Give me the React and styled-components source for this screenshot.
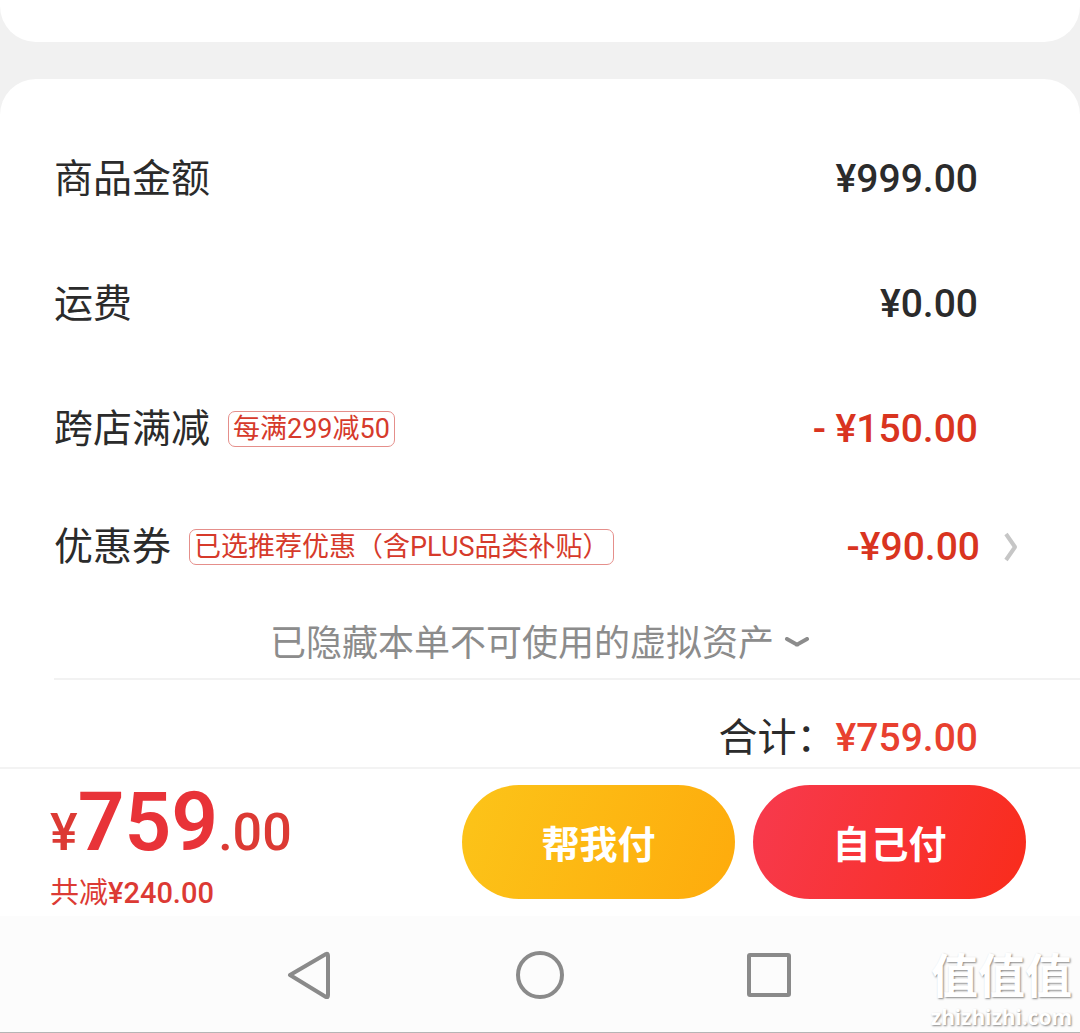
import styled, { createGlobalStyle } from 'styled-components';

const rows = [
  { label: '商品金额', price: '¥999.00' },
  { label: '运费', price: '¥0.00' },
  { label: '跨店满减', tag: '每满299减50', price: '- ¥150.00', off: true },
];

function App() {
  return (
    <>
      <GlobalStyle />
      <Page>
        <PrevCard />
        <Card>
          {rows.map(({ label, tag, price, off }) => (
            <Row key={label}>
              <Label>{label}</Label>
              {tag && <Tag>{tag}</Tag>}
              <Price $off={off}>{price}</Price>
            </Row>
          ))}
          <CouponRow type='button'>
            <Label>优惠券</Label>
            <Tag>已选推荐优惠（含PLUS品类补贴）</Tag>
            <Price $off>-¥90.00</Price>
            <svg width='14' height='30' viewBox='0 0 14 30' fill='none'>
              <path
                d='M2 2 L11 15 L2 28'
                stroke='#c6c6c6'
                strokeWidth='4'
                strokeLinejoin='round'
              />
            </svg>
          </CouponRow>
          <HiddenNote type='button'>
            已隐藏本单不可使用的虚拟资产
            <svg width='26' height='14' viewBox='0 0 26 14' fill='none'>
              <path
                d='M3 2 L12 7 Q13 8 14 7 L23 2'
                stroke='#8c8c8c'
                strokeWidth='4'
                strokeLinecap='round'
              />
            </svg>
          </HiddenNote>
          <Total>
            <Label>合计：</Label>
            <TotalPrice>¥759.00</TotalPrice>
          </Total>
        </Card>
        <PayBar>
          <Summary>
            <BigPrice>
              ¥<strong>759</strong>.00
            </BigPrice>
            <Saved>
              共减<b>¥240.00</b>
            </Saved>
          </Summary>
          <PayButtons>
            <PayButton type='button' $from='#fcc419' $to='#feab0c'>
              帮我付
            </PayButton>
            <PayButton type='button' $from='#f73a4e' $to='#f92c1b'>
              自己付
            </PayButton>
          </PayButtons>
        </PayBar>
        <SystemNav>
          <NavButton type='button' aria-label='back'>
            <svg width='50' height='50' viewBox='0 0 50 50'>
              <path d='M5 26 L41 5 Q43 4 43 7 V46 Q43 49 41 48 Z' />
            </svg>
          </NavButton>
          <NavButton type='button' aria-label='home'>
            <svg width='50' height='50' viewBox='0 0 50 50'>
              <circle cx='25' cy='26' r='22' />
            </svg>
          </NavButton>
          <NavButton type='button' aria-label='recent'>
            <svg width='50' height='50' viewBox='0 0 50 50'>
              <rect x='4' y='6' width='40' height='40' rx='1' />
            </svg>
          </NavButton>
          <Watermark>
            <span>值值值</span>
            <small>zhizhizhi.com</small>
          </Watermark>
        </SystemNav>
      </Page>
    </>
  );
}

const GlobalStyle = createGlobalStyle`
  * {
    box-sizing: border-box;
  }
  body {
    margin: 0;
    background: #f1f1f1;
    font-family: Roboto, 'Noto Sans CJK SC', sans-serif;
    color: #2b2b2b;
  }
  button {
    border: none;
    padding: 0;
    background: none;
    color: inherit;
    font-family: inherit;
    cursor: pointer;
  }
  svg {
    flex: none;
  }
`;

const Page = styled.main`
  display: flex;
  flex-direction: column;
  min-height: 100vh;
`;

const PrevCard = styled.div`
  height: 42px;
  margin-bottom: 37px;
  border-radius: 0 0 36px 36px;
  background: #fff;
`;

const Card = styled.section`
  padding-top: 37px;
  border-radius: 36px 36px 0 0;
  background: #fff;
`;

const Row = styled.div`
  display: flex;
  align-items: center;
  height: 125px;
  padding: 0 102px 0 54px;
`;

const CouponRow = styled(Row).attrs({ as: 'button' })`
  width: 100%;
  height: 111px;
  padding-right: 62px;
  text-align: left;
  svg {
    margin-left: 24px;
  }
`;

const Label = styled.span`
  font-size: 39px;
  line-height: 48px;
`;

const Tag = styled.span`
  margin-left: 18px;
  padding: 0 4px;
  border: 1px solid #e58f8b;
  border-radius: 7px;
  color: #d63a2b;
  font-size: 27px;
  line-height: 34px;
`;

const Price = styled.span`
  margin-left: auto;
  color: ${(props) => (props.$off ? '#d9341f' : '#2b2b2b')};
  font-size: 39px;
  font-weight: 500;
  line-height: 48px;
`;

const HiddenNote = styled.button`
  display: flex;
  align-items: center;
  justify-content: center;
  gap: 10px;
  width: 100%;
  height: 76px;
  padding-top: 8px;
  color: #8c8c8c;
  font-size: 36px;
  line-height: 48px;
`;

const Total = styled.div`
  display: flex;
  align-items: center;
  justify-content: flex-end;
  height: 89px;
  margin-left: 54px;
  padding: 28px 102px 0 0;
  border-top: 2px solid #f2f2f2;
`;

const TotalPrice = styled(Price)`
  margin-left: 0;
  color: #e8402f;
`;

const PayBar = styled.footer`
  display: flex;
  align-items: center;
  justify-content: space-between;
  height: 149px;
  padding: 0 54px 2px 50px;
  border-top: 2px solid #f3f3f3;
  background: #fff;
`;

const Summary = styled.div`
  padding-top: 8px;
  color: #dc3a34;
`;

const BigPrice = styled.div`
  font-size: 52px;
  font-weight: 500;
  line-height: 84px;
  strong {
    color: #e83338;
    font-size: 82px;
    font-weight: 600;
  }
`;

const Saved = styled.div`
  font-size: 29px;
  line-height: 36px;
  b {
    font-weight: 500;
  }
`;

const PayButtons = styled.div`
  display: flex;
  gap: 18px;
`;

const PayButton = styled.button`
  width: 273px;
  height: 114px;
  border-radius: 57px;
  background: linear-gradient(
    110deg,
    ${(props) => props.$from},
    ${(props) => props.$to}
  );
  && {
    color: #fff;
  }
  font-size: 38px;
  font-weight: 700;
`;

const SystemNav = styled.nav`
  position: relative;
  display: flex;
  flex: 1;
  align-items: center;
  justify-content: center;
  min-height: 116px;
  border-bottom: 1px solid #b5b5b5;
  background: #fcfcfc;
`;

const NavButton = styled.button`
  display: flex;
  justify-content: center;
  width: 230px;
  svg {
    fill: none;
    stroke: #8a8a8a;
    stroke-width: 4;
    stroke-linejoin: round;
  }
`;

const Watermark = styled.div`
  position: absolute;
  right: 8px;
  bottom: 3px;
  display: flex;
  flex-direction: column;
  align-items: flex-end;
  color: #fff;
  font-weight: 700;
  text-shadow: 1px 1px 2px #888;
  span {
    font-size: 47px;
    line-height: 56px;
  }
  small {
    font-family: 'Noto Sans', sans-serif;
    font-size: 21px;
    line-height: 24px;
  }
`;

export default App;
